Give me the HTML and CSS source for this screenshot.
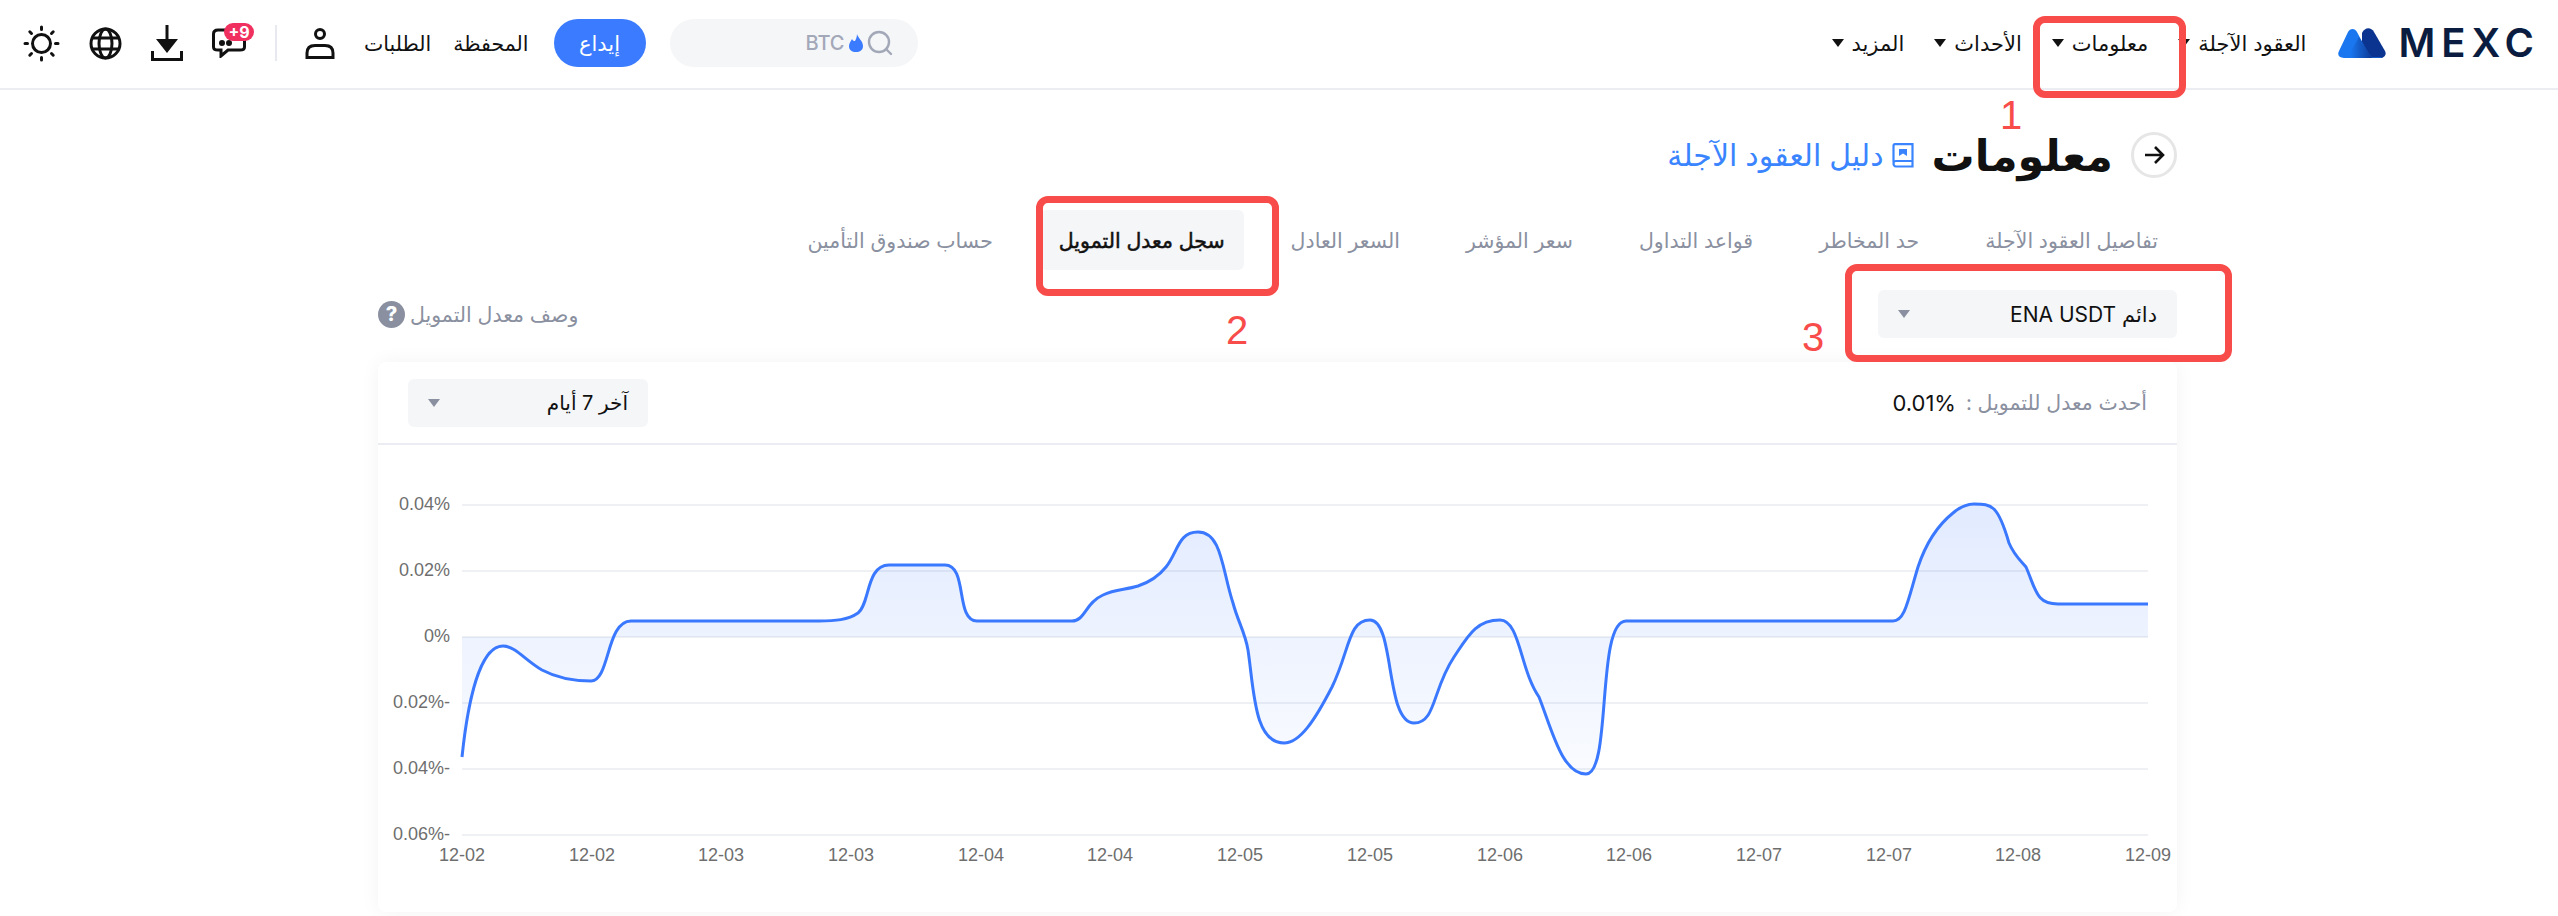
FILE: index.html
```html
<!DOCTYPE html>
<html lang="ar" dir="rtl">
<head>
    <meta charset="UTF-8">
    <meta name="viewport" content="width=device-width, initial-scale=1.0">
    <title>معلومات - MEXC</title>
    <link rel="stylesheet" href="styles.css">
</head>
<body>
    <header class="topbar">
        <div class="topbar-main">
            <div class="logo" dir="ltr">
                <svg class="logo-mark" width="48" height="30" viewBox="0 0 48 30">
                    <defs>
                        <linearGradient id="logoMid" x1="0" y1="0" x2="1" y2="0">
                            <stop offset="0" stop-color="#1a77f0"/>
                            <stop offset="1" stop-color="#0d3a96"/>
                        </linearGradient>
                    </defs>
                    <path d="M24 5 C27 -1 33 -1 36 4 L47 23 C49 27 46 30 42 30 H24 Z" fill="#0b3390"/>
                    <path d="M1 23 L10 4 C12 0 17 0 19 4 L30 25 C31 28 29 30 26 30 H6 C1 30 -1 27 1 23 Z" fill="#1a77f0"/>
                    <path d="M13 23 L21 9 L31 25 L34 30 H18 C13 30 11 27 13 23 Z" fill="url(#logoMid)"/>
                    <path d="M31 25 L34 30 H42 C44 30 45 29 45 29 H34 Z" fill="#1459c4"/>
                </svg>
                <span class="logo-text">MEXC</span>
            </div>
            <nav class="main-nav">
                <a class="nav-item">العقود الآجلة<i class="caret"></i></a>
                <a class="nav-item">معلومات<i class="caret"></i></a>
                <a class="nav-item">الأحداث<i class="caret"></i></a>
                <a class="nav-item">المزيد<i class="caret"></i></a>
            </nav>
        </div>
        <div class="topbar-tools">
            <div class="search">
                <svg width="26" height="26" viewBox="0 0 26 26" fill="none" stroke="#a3a8b8" stroke-width="2.4">
                    <circle cx="12" cy="12" r="10"/>
                    <path d="M19 19 L24 24" stroke-linecap="round"/>
                </svg>
                <svg width="14" height="18" viewBox="0 0 14 18"><path d="M8 0 C9 4 14 7 14 12 C14 16 11 18 7 18 C3 18 0 16 0 12 C0 9 2 7 3 5 C4 7 5 7 6 7 C7 5 8 3 8 0 Z" fill="#3a7bff"/></svg>
                <span class="search-text">BTC</span>
            </div>
            <button class="deposit">إيداع</button>
            <div class="tool-links">
                <a>المحفظة</a>
                <a>الطلبات</a>
            </div>
            <svg class="icon-user" width="30" height="31" viewBox="0 0 30 31" fill="none" stroke="#111" stroke-width="3">
                <circle cx="15" cy="6" r="4.5"/>
                <path d="M2 29.5 V25 C2 20 5 17.5 10 17.5 H20 C25 17.5 28 20 28 25 V29.5 Z"/>
            </svg>
            <span class="tool-divider"></span>
            <div class="chat">
                <svg width="34" height="30" viewBox="0 0 34 30" fill="none" stroke="#111" stroke-width="3">
                    <path d="M6 2 H28 C31 2 32.500 3 32.500 6 V19 C32.500 21 31 22 28 22 H16 L9 28 V22 H6 C3 22 1.500 21 1.500 19 V6 C1.500 3 3 2 6 2 Z"/>
                    <circle cx="10" cy="15" r="1.500" fill="#111"/>
                    <circle cx="17" cy="15" r="1.500" fill="#111"/>
                </svg>
                <span class="badge" dir="ltr">+9</span>
            </div>
            <svg width="32" height="36" viewBox="0 0 32 36" fill="#111">
                <rect x="14.500" y="0" width="3" height="18"/>
                <path d="M5 14 H27 L16 28 Z"/>
                <path d="M1.500 26 V34.500 H30.500 V26" fill="none" stroke="#111" stroke-width="3"/>
            </svg>
            <svg width="33" height="33" viewBox="0 0 33 33" fill="none" stroke="#111" stroke-width="3">
                <circle cx="16.500" cy="16.500" r="14.500"/>
                <ellipse cx="16.500" cy="16.500" rx="6.500" ry="14.500"/>
                <path d="M3 11 H30 M3 22 H30"/>
            </svg>
            <svg width="37" height="37" viewBox="0 0 37 37" fill="none" stroke="#111" stroke-width="3" stroke-linecap="round">
                <circle cx="18.500" cy="18.500" r="9"/>
                <path d="M18.500 2 V4.500 M18.500 32.500 V35 M2 18.500 H4.500 M32.500 18.500 H35 M6.800 6.800 L8.500 8.500 M28.500 28.500 L30.200 30.200 M6.800 30.200 L8.500 28.500 M28.500 8.500 L30.200 6.800"/>
            </svg>
        </div>
    </header>

    <main class="content">
        <div class="title-row">
            <span class="back-btn">
                <svg width="22" height="20" viewBox="0 0 22 20" fill="none" stroke="#111" stroke-width="2.600">
                    <path d="M2 10 H20 M12 2 L20 10 L12 18"/>
                </svg>
            </span>
            <h1>معلومات</h1>
            <a class="guide-link">
                <svg width="22" height="25" viewBox="0 0 22 25" fill="none" stroke="#3a85ff" stroke-width="2.200">
                    <path d="M1.500 19 V3 C1.500 2 2 1.200 3 1.200 H20.500 V23.500 H4 C2.500 23.500 1.500 22 1.500 20.500 C1.500 19 2.500 18 4 18 H20.500"/>
                    <path d="M7 6 H15 V13 L11 10.500 L7 13 Z" fill="#3a85ff" stroke="none"/>
                </svg>
                دليل العقود الآجلة
            </a>
        </div>

        <div class="tabs">
            <a class="tab">تفاصيل العقود الآجلة</a>
            <a class="tab">حد المخاطر</a>
            <a class="tab">قواعد التداول</a>
            <a class="tab">سعر المؤشر</a>
            <a class="tab">السعر العادل</a>
            <a class="tab active">سجل معدل التمويل</a>
            <a class="tab">حساب صندوق التأمين</a>
        </div>

        <div class="filter-row">
            <div class="select select-contract">
                <span>دائم <span dir="ltr">ENA USDT</span></span>
                <i class="caret caret-gray"></i>
            </div>
            <a class="desc-link">
                وصف معدل التمويل
                <span class="help-icon">?</span>
            </a>
        </div>

        <section class="card">
            <div class="card-head">
                <div class="latest">
                    <span class="latest-label">أحدث معدل للتمويل :</span>
                    <span class="latest-value" dir="ltr">0.01%</span>
                </div>
                <div class="select select-range">
                    <span>آخر 7 أيام</span>
                    <i class="caret caret-gray"></i>
                </div>
            </div>
            <svg class="chart" width="1799" height="467" viewBox="378 445 1799 467">
                <defs>
                    <linearGradient id="areaFill" gradientUnits="userSpaceOnUse" x1="0" y1="504" x2="0" y2="835">
                        <stop offset="0" stop-color="#3a78ff" stop-opacity="0.15"/>
                        <stop offset="1" stop-color="#3a78ff" stop-opacity="0"/>
                    </linearGradient>
                </defs>
                <g class="grid">
                    <path d="M462 505 H2148"/>
                    <path d="M462 571 H2148"/>
                    <path d="M462 637 H2148"/>
                    <path d="M462 703 H2148"/>
                    <path d="M462 769 H2148"/>
                    <path d="M462 835 H2148"/>
                </g>
                <g class="y-labels">
                    <text x="450" y="510">0.04%</text>
                    <text x="450" y="576">0.02%</text>
                    <text x="450" y="642">0%</text>
                    <text x="450" y="708">0.02%-</text>
                    <text x="450" y="774">0.04%-</text>
                    <text x="450" y="840">0.06%-</text>
                </g>
                <g class="x-labels">
                    <text x="462" y="861">12-02</text>
                    <text x="592" y="861">12-02</text>
                    <text x="721" y="861">12-03</text>
                    <text x="851" y="861">12-03</text>
                    <text x="981" y="861">12-04</text>
                    <text x="1110" y="861">12-04</text>
                    <text x="1240" y="861">12-05</text>
                    <text x="1370" y="861">12-05</text>
                    <text x="1500" y="861">12-06</text>
                    <text x="1629" y="861">12-06</text>
                    <text x="1759" y="861">12-07</text>
                    <text x="1889" y="861">12-07</text>
                    <text x="2018" y="861">12-08</text>
                    <text x="2148" y="861">12-09</text>
                </g>
                <path class="area" d="M462 757 C468 700 480 646 503 646 C515 646 525 660 542 670 C557 678 574 681 591 681 C610 681 606 621 631 621 H819 C835 621 848 620 858 613 C870 604 866 565 889 565 H945 C968 565 955 621 977 621 H1072 C1085 621 1085 603 1103 595 C1115 589 1125 590 1138 586 C1150 582 1158 577 1166 567 C1178 552 1178 532 1198 532 C1222 532 1222 570 1233 603 C1238 622 1245 632 1248 650 C1254 690 1254 743 1284 743 C1300 743 1315 720 1332 687 C1350 650 1348 620 1370 620 C1395 620 1385 723 1414 723 C1436 723 1432 690 1454 657 C1468 636 1476 620 1500 620 C1520 620 1520 670 1539 697 C1552 730 1562 774 1586 774 C1612 774 1596 621 1626 621 H1893 C1905 621 1908 600 1918 567 C1926 543 1938 525 1953 513 C1960 507 1966 504 1974 504 C1992 504 1998 505 2009 543 C2014 555 2020 560 2026 567 C2036 590 2036 604 2058 604 H2148 V637 H462 Z"/>
                <path class="line" d="M462 757 C468 700 480 646 503 646 C515 646 525 660 542 670 C557 678 574 681 591 681 C610 681 606 621 631 621 H819 C835 621 848 620 858 613 C870 604 866 565 889 565 H945 C968 565 955 621 977 621 H1072 C1085 621 1085 603 1103 595 C1115 589 1125 590 1138 586 C1150 582 1158 577 1166 567 C1178 552 1178 532 1198 532 C1222 532 1222 570 1233 603 C1238 622 1245 632 1248 650 C1254 690 1254 743 1284 743 C1300 743 1315 720 1332 687 C1350 650 1348 620 1370 620 C1395 620 1385 723 1414 723 C1436 723 1432 690 1454 657 C1468 636 1476 620 1500 620 C1520 620 1520 670 1539 697 C1552 730 1562 774 1586 774 C1612 774 1596 621 1626 621 H1893 C1905 621 1908 600 1918 567 C1926 543 1938 525 1953 513 C1960 507 1966 504 1974 504 C1992 504 1998 505 2009 543 C2014 555 2020 560 2026 567 C2036 590 2036 604 2058 604 H2148"/>
            </svg>
        </section>
    </main>

    <!-- red marks drawn on top of the screenshot -->
    <div class="mark mark-one"></div>
    <div class="mark mark-two"></div>
    <div class="mark mark-three"></div>
    <span class="mark-num num-one">1</span>
    <span class="mark-num num-two">2</span>
    <span class="mark-num num-three">3</span>
</body>
</html>
```

FILE: styles.css
```css
* {
    box-sizing: border-box;
}
html, body {
    margin: 0;
    height: 916px;
    overflow: hidden;
}
body {
    position: relative;
    font-family: Inter, "Noto Sans", "DejaVu Sans", sans-serif;
    background-color: white;
    color: #111;
}
a {
    color: inherit;
    text-decoration: none;
}

/* top bar */
.topbar {
    display: flex;
    justify-content: space-between;
    align-items: center;
    height: 90px;
    padding: 0 24px 2px 23px;
    border-bottom: 2px solid #ecedf2;
}
.topbar-main {
    display: flex;
    align-items: center;
    gap: 32px;
}
.logo {
    display: flex;
    align-items: center;
    gap: 12px;
}
.logo-text {
    font-size: 40px;
    font-weight: 600;
    line-height: 1;
    letter-spacing: 6px;
    margin-right: -6px;
    color: #0a1c3f;
}
.main-nav {
    display: flex;
    align-items: center;
    gap: 30px;
}
.nav-item {
    display: flex;
    align-items: center;
    gap: 8px;
    font-size: 21px;
}
.caret {
    display: inline-block;
    width: 0;
    height: 0;
    border-left: 6px solid transparent;
    border-right: 6px solid transparent;
    border-top: 8px solid #111;
}
.caret-gray {
    border-top-color: #8a90a0;
}
.topbar-tools {
    display: flex;
    align-items: center;
    gap: 29px;
}
.search {
    display: flex;
    align-items: center;
    gap: 4px;
    width: 248px;
    height: 48px;
    padding: 0 25px;
    border-radius: 24px;
    background-color: #f5f6f8;
}
.search-text {
    font-size: 20px;
    font-weight: 500;
    color: #a3a8b8;
}
.deposit {
    width: 92px;
    height: 48px;
    margin-inline-start: -5px;
    margin-inline-end: -4px;
    border: none;
    border-radius: 24px;
    background-color: #3a7bff;
    color: white;
    font-family: inherit;
    font-size: 21px;
    font-weight: 500;
}
.tool-links {
    display: flex;
    gap: 22px;
    font-size: 20.500px;
}
.tool-divider {
    width: 2px;
    height: 36px;
    background-color: #e8e9ee;
    margin: 0 -1px 0 0;
}
.chat {
    position: relative;
    display: flex;
}
.badge {
    position: absolute;
    top: -5px;
    left: 12px;
    width: 30px;
    height: 18px;
    border-radius: 9px;
    background-color: #f0305f;
    color: white;
    font-size: 16px;
    font-weight: 700;
    line-height: 18px;
    text-align: center;
}

/* page content */
.content {
    padding: 0 381px 0 378px;
}
.title-row {
    display: flex;
    align-items: center;
    gap: 18px;
    height: 120px;
    padding-top: 10px;
}
.back-btn {
    display: flex;
    align-items: center;
    justify-content: center;
    width: 46px;
    height: 46px;
    border: 3px solid #e6e6e6;
    border-radius: 50%;
}
.title-row h1 {
    margin: 0;
    font-size: 43px;
    font-weight: 700;
    line-height: 40px;
}
.guide-link {
    display: flex;
    align-items: center;
    gap: 8px;
    font-size: 30px;
    font-weight: 500;
    color: #3a85ff;
}
.tabs {
    display: flex;
    align-items: center;
    gap: 28px;
    height: 60px;
}
.tab {
    display: flex;
    align-items: center;
    height: 60px;
    padding: 0 19px;
    border-radius: 6px;
    font-size: 20.500px;
    color: #8a90a0;
}
.tab.active {
    background-color: #f5f6f8;
    color: #111;
    -webkit-text-stroke: 0.5px #111;
}
.filter-row {
    display: flex;
    justify-content: space-between;
    align-items: center;
    height: 48px;
    margin: 20px 0 24px;
}
.select {
    display: flex;
    justify-content: space-between;
    align-items: center;
    height: 48px;
    padding: 0 20px;
    border-radius: 6px;
    background-color: #f5f6f8;
    font-size: 20px;
}
.select-contract {
    width: 299px;
    font-size: 21px;
}
.select-range {
    width: 240px;
}
.desc-link {
    display: flex;
    align-items: center;
    gap: 5px;
    font-size: 20.500px;
    color: #8a90a0;
}
.help-icon {
    width: 27px;
    height: 27px;
    border-radius: 50%;
    background-color: #8a90a0;
    color: white;
    font-size: 20px;
    font-weight: 800;
    line-height: 27px;
    text-align: center;
}
.card {
    height: 550px;
    border-radius: 8px;
    box-shadow: 0 0 20px rgba(0,0,0,0.05);
}
.card-head {
    display: flex;
    justify-content: space-between;
    align-items: center;
    height: 83px;
    padding: 0 30px;
    border-bottom: 2px solid #ecedf2;
}
.latest {
    display: flex;
    align-items: center;
    gap: 10px;
    font-size: 20.500px;
}
.latest-label {
    color: #8a90a0;
}
.latest-value {
    font-size: 22px;
}
.chart {
    display: block;
}
.grid path {
    fill: none;
    stroke: #eef0f4;
    stroke-width: 2;
}
.y-labels text, .x-labels text {
    direction: ltr;
    font-family: "Liberation Sans", Arial, sans-serif;
    font-size: 18px;
    fill: #6e6e6e;
}
.y-labels text {
    text-anchor: end;
}
.x-labels text {
    text-anchor: middle;
}
.area {
    fill: url(#areaFill);
}
.line {
    fill: none;
    stroke: #3a78ff;
    stroke-width: 3;
}

/* annotations */
.mark {
    position: absolute;
    border: 7px solid #f84c4a;
    border-radius: 12px;
}
.mark-one {
    left: 2033px;
    top: 16px;
    width: 153px;
    height: 82px;
}
.mark-two {
    left: 1036px;
    top: 196px;
    width: 243px;
    height: 100px;
}
.mark-three {
    left: 1845px;
    top: 264px;
    width: 387px;
    height: 98px;
}
.mark-num {
    position: absolute;
    font-family: "Liberation Sans", Arial, sans-serif;
    font-size: 40px;
    line-height: 1;
    color: #f84c4a;
}
.num-one {
    left: 2000px;
    top: 95px;
}
.num-two {
    left: 1226px;
    top: 310px;
}
.num-three {
    left: 1802px;
    top: 317px;
}
```
